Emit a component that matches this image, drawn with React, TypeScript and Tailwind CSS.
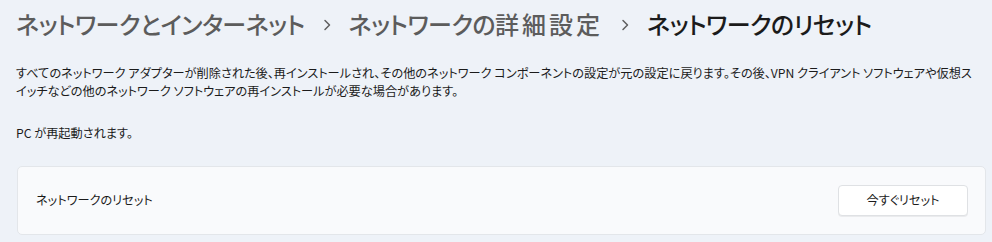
const font = "font-['Noto_Sans_CJK_JP','Noto_Sans',sans-serif] [font-feature-settings:'palt']"

function Chevron() {
    return (
        <svg width="10" height="14" viewBox="0 0 10 14" className="mx-[17px] mt-[2px] shrink-0">
            <path d="M3 2.5 L7.5 7 L3 11.5" fill="none" stroke="#5f5f5f" strokeWidth="1.5" strokeLinecap="round" strokeLinejoin="round" />
        </svg>
    )
}

export default function App() {
    return (
        <div className={`w-[992px] h-[242px] bg-[#eef2f8] overflow-hidden ${font}`}>
            {/* Breadcrumb title */}
            <div className="flex items-center h-[48px] pl-[16px] text-[24px] font-medium leading-none tracking-[-0.5px]">
                <span className="text-[#5c5c5c]">ネットワークとインターネット</span>
                <Chevron />
                <span className="text-[#5c5c5c]">
                    ネットワークの<span className="tracking-[3px]">詳細設定</span>
                </span>
                <Chevron />
                <span className="text-[#1b1b1b]">ネットワークのリセット</span>
            </div>

            {/* Description */}
            <div className="px-[16px] pt-[16px] text-[12.2px] leading-[18px] text-[#1b1b1b]">
                <p>
                    <span className="block whitespace-nowrap">
                        すべてのネットワーク アダプターが削除された後、再インストールされ、その他のネットワーク コンポーネントの設定が元の設定に戻ります。その後、VPN クライアント ソフトウェアや仮想ス
                    </span>
                    <span className="block whitespace-nowrap">
                        イッチなどの他のネットワーク ソフトウェアの再インストールが必要な場合があります。
                    </span>
                </p>
                <p className="mt-[24px]">PC が再起動されます。</p>
            </div>

            {/* Reset card */}
            <div className="ml-[17px] mr-[6px] mt-[24px] h-[69px] flex items-center justify-between pl-[18px] pr-[17px] bg-[#f9fafc] border border-[#e3e6ea] rounded-[5px]">
                <span className="text-[12.2px] text-[#1b1b1b]">ネットワークのリセット</span>
                <button
                    type="button"
                    className="w-[130px] h-[31px] flex items-center justify-center bg-white border border-[#dfe1e4] rounded-[4px] text-[12.2px] text-[#1b1b1b] shadow-[0_1px_0_rgba(0,0,0,0.06)]"
                >
                    今すぐリセット
                </button>
            </div>
        </div>
    )
}
